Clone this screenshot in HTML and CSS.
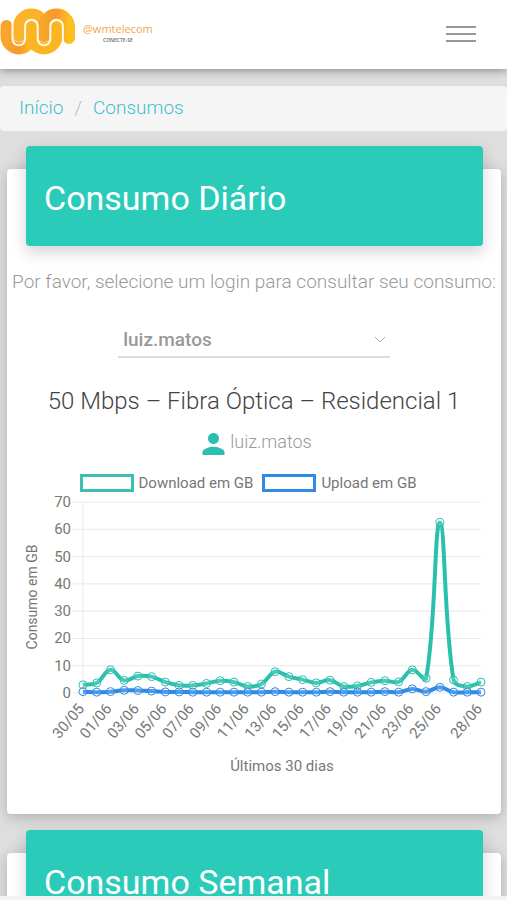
FILE: index.html
```html
<!DOCTYPE html>
<html lang="pt-BR">
<head>
    <meta charset="UTF-8">
    <meta name="viewport" content="width=device-width, initial-scale=1.0">
    <title>Consumos</title>
    <link rel="stylesheet" href="styles.css">
</head>
<body>
    <div class="page">
        <header class="navbar">
            <a href="#" class="brand">
                <svg class="brand-mark" viewBox="0 0 76 48" aria-hidden="true">
                    <defs>
                        <linearGradient id="gold" x1="0" y1="0" x2="1" y2="0">
                            <stop offset="0" stop-color="#f7a62b"/>
                            <stop offset="0.5" stop-color="#f8972c"/>
                            <stop offset="1" stop-color="#fdc020"/>
                        </linearGradient>
                    </defs>
                    <g fill="none" stroke-width="12" stroke-linecap="round">
                        <path stroke="url(#gold)" d="M6.500 18V28a12.500 12.500 0 0 0 25 0V19"/>
                        <path stroke="#fbb521" d="M31.500 19V28a12.500 12.500 0 0 0 25 0V19"/>
                        <path stroke="#fab32a" d="M19 28V19a12.500 12.500 0 0 1 25 0V28"/>
                        <path stroke="url(#gold)" d="M44 28V19a12.500 12.500 0 0 1 25 0V30"/>
                    </g>
                    <path fill="none" stroke="#fffbea" stroke-width="2" stroke-linecap="round" d="M12.500 12V31a6.300 6.300 0 0 0 12.600 0V18a6.300 6.300 0 0 1 12.600 0V31a6.300 6.300 0 0 0 12.600 0V18a6.300 6.300 0 0 1 12.600 0V37"/>
                </svg>
                <span class="brand-text">
                    <span class="brand-name">@wmtelecom</span>
                    <span class="brand-slogan">CONECTE-SE</span>
                </span>
            </a>
            <button type="button" class="menu-btn" aria-label="Menu">
                <span></span>
                <span></span>
                <span></span>
            </button>
        </header>

        <nav class="breadcrumb">
            <a href="#">Início</a>
            <span class="separator">/</span>
            <a href="#">Consumos</a>
        </nav>

        <main>
            <section class="card">
                <h2 class="card-title">Consumo Diário</h2>
                <form class="login-form">
                    <label for="login">Por favor, selecione um login para consultar seu consumo:</label>
                    <div class="select-box">
                        <select id="login" name="login">
                            <option>luiz.matos</option>
                        </select>
                        <svg class="arrow" viewBox="0 0 12 8" aria-hidden="true"><path d="M1 1l5 5 5-5"/></svg>
                    </div>
                </form>
                <h3 class="plan">50 Mbps – Fibra Óptica – Residencial 1</h3>
                <p class="user">
                    <svg viewBox="4 4 16 16" aria-hidden="true"><path d="M12 12c2.210 0 4-1.790 4-4s-1.790-4-4-4-4 1.790-4 4 1.790 4 4 4zm0 2c-2.670 0-8 1.340-8 4v2h16v-2c0-2.660-5.330-4-8-4z"/></svg>
                    luiz.matos
                </p>
                <div class="legend">
                    <span class="key download"></span>Download em GB
                    <span class="key upload"></span>Upload em GB
                </div>
                <svg class="chart" id="daily" viewBox="0 0 494 285" role="img" aria-label="Consumo em GB, últimos 30 dias"></svg>
            </section>

            <section class="card">
                <h2 class="card-title">Consumo Semanal</h2>
            </section>
        </main>
    </div>
    <script src="script.js"></script>
</body>
</html>
```
FILE: styles.css
```css
* {
  box-sizing: border-box;
}

body {
  margin: 0;
  background: #f3f3f3;
  color: #999;
  font-family: Roboto, "Liberation Sans", sans-serif;
  font-weight: 300;
}

.page {
  height: calc(100vh - 4px);
  overflow: hidden auto;
  scrollbar-width: none;
  background: #dedede;
}

.navbar {
  position: relative;
  display: flex;
  justify-content: space-between;
  align-items: center;
  height: 69px;
  padding: 0 31px 2px 0;
  background: #fff;
  box-shadow: 0 2px 8px rgba(0, 0, 0, 0.35);
}

.brand {
  display: flex;
  align-items: center;
  gap: 7px;
  padding-bottom: 3px;
  text-decoration: none;
}

.brand-mark {
  width: 76px;
  height: 48px;
}

.brand-text {
  display: flex;
  flex-direction: column;
  align-items: center;
  font-family: "Open Sans", sans-serif;
}

.brand-name {
  color: #f3a64d;
  font-size: 11px;
  line-height: 15px;
  font-weight: 400;
}

.brand-slogan {
  color: #666;
  font-size: 5px;
  line-height: 8px;
  font-weight: 600;
}

.menu-btn {
  display: flex;
  flex-direction: column;
  gap: 5px;
  padding: 0;
  border: none;
  background: none;
  cursor: pointer;
}

.menu-btn span {
  width: 30px;
  height: 2px;
  background: #999;
}

.breadcrumb {
  display: flex;
  gap: 11px;
  margin-top: 17px;
  padding: 10px 19px 12px;
  border-radius: 4px;
  background: #f5f5f5;
  font-size: 19px;
  line-height: 23px;
}

.breadcrumb a {
  color: #3fbfcb;
  text-decoration: none;
}

.separator {
  color: #bbb;
}

main {
  padding: 38px 6px 0 7px;
}

.card {
  margin-bottom: 39px;
  padding-bottom: 37px;
  border-radius: 4px;
  background: #fff;
  box-shadow: 0 3px 14px rgba(0, 0, 0, 0.22);
  text-align: center;
}

.card-title {
  position: relative;
  top: -23px;
  margin: 0 18px 0 19px;
  padding: 32px 18px 28px;
  border-radius: 4px;
  background: #2bcbba;
  box-shadow: 0 6px 16px rgba(0, 0, 0, 0.18);
  color: #fff;
  font-size: 34px;
  line-height: 40px;
  font-weight: 400;
  text-align: left;
}

.login-form label {
  display: block;
  padding-top: 1px;
  font-size: 19px;
  line-height: 24px;
  white-space: nowrap;
}

.select-box {
  position: relative;
  width: 55%;
  margin: 28px auto 0;
}

.select-box select {
  width: 100%;
  height: 36px;
  padding: 0 5px;
  border: none;
  border-bottom: 2px solid #ddd;
  background: none;
  color: #999;
  font: 500 19px Roboto, sans-serif;
  appearance: none;
}

.arrow {
  position: absolute;
  top: 14px;
  right: 4px;
  width: 12px;
  height: 8px;
  fill: none;
  stroke: #aaa;
  pointer-events: none;
}

.plan {
  margin: 28px 0 13px;
  color: #444;
  font-size: 24px;
  line-height: 30px;
  font-weight: 300;
}

.user {
  display: flex;
  justify-content: center;
  align-items: center;
  gap: 5px;
  margin: 0 0 19px;
  padding-left: 6px;
  font-size: 18px;
  line-height: 24px;
}

.user svg {
  width: 23px;
  height: 22px;
  margin-top: 4px;
  fill: #2bbfb0;
}

.legend {
  display: flex;
  justify-content: center;
  align-items: center;
  gap: 5px;
  height: 18px;
  padding-right: 12px;
  color: #777;
  font-size: 15px;
  font-weight: 400;
  white-space: nowrap;
}

.key {
  width: 54px;
  height: 18px;
  border: 3px solid #3cbfae;
}

.upload {
  margin-left: 4px;
  border-color: #2f8ae5;
}

.chart {
  display: block;
  width: 100%;
}

.chart text {
  fill: #777;
  font-size: 15px;
  font-weight: 400;
}

.chart .y-title {
  font-size: 14px;
}

.grid {
  stroke: #e8e8e8;
}

.line {
  fill: none;
  stroke-width: 4;
}

.point {
  fill: rgba(255, 255, 255, 0.15);
}
```
FILE: script.js
```js
const chart = document.querySelector('#daily');
const left = 76;
const right = 474;
const top0 = 10;
const bottom = 201;
const max = 70;

const download = [3, 3.7, 8.5, 4.6, 6.2, 6, 4, 2.8, 2.8, 3.5, 4.5, 4, 2.4, 3.3, 7.8, 6, 4.9, 3.7, 4.7, 2.4, 2.6, 3.9, 4.5, 4.1, 8.5, 5.4, 62.5, 4.8, 2.4, 4];
const upload = [0.5, 0.3, 0.5, 1, 0.9, 0.7, 0.4, 0.4, 0.3, 0.3, 0.3, 0.3, 0.3, 0.3, 0.5, 0.3, 0.3, 0.3, 0.5, 0.3, 0.3, 0.3, 0.5, 0.3, 1.5, 0.5, 2.1, 0.3, 0.3, 0.3];
const labels = ['30/05', '01/06', '03/06', '05/06', '07/06', '09/06', '11/06', '13/06', '15/06', '17/06', '19/06', '21/06', '23/06', '25/06', '28/06'];

function add(name, attrs, text) {
  const el = document.createElementNS('http://www.w3.org/2000/svg', name);
  for (const key in attrs) {
    el.setAttribute(key, attrs[key]);
  }
  if (text) el.textContent = text;
  chart.appendChild(el);
}

const x = i => left + (right - left) * i / 29;
const y = v => bottom - (bottom - top0) * v / max;
const clamp = v => Math.min(bottom, Math.max(top0, v));

// axes
for (let v = 0; v <= max; v += 10) {
  add('line', { class: 'grid', x1: left - 10, x2: right, y1: y(v), y2: y(v) });
  add('text', { x: left - 12, y: y(v) + 5, 'text-anchor': 'end' }, String(v));
}
add('line', { class: 'grid', x1: left, x2: left, y1: top0, y2: bottom + 8 });

labels.forEach((label, n) => {
  const px = x(n === 14 ? 29 : n * 2) + 2;
  add('text', { 'text-anchor': 'end', transform: `translate(${px} ${bottom + 16}) rotate(-50)` }, label);
});

add('text', { class: 'y-title', 'text-anchor': 'middle', transform: 'translate(30 105) rotate(-90)' }, 'Consumo em GB');
add('text', { x: (left + right) / 2, y: 279, 'text-anchor': 'middle' }, 'Últimos 30 dias');

// smoothed line with a ring on every day
function drawSeries(values, color) {
  const pts = values.map((v, i) => [x(i), y(v)]);
  const controls = pts.map((p, i) => {
    const prev = pts[i - 1] || p;
    const next = pts[i + 1] || p;
    const a = Math.hypot(p[0] - prev[0], p[1] - prev[1]);
    const b = Math.hypot(next[0] - p[0], next[1] - p[1]);
    const fa = 0.4 * a / (a + b);
    const fb = 0.4 * b / (a + b);
    const dx = next[0] - prev[0];
    const dy = next[1] - prev[1];
    return {
      before: [p[0] - fa * dx, clamp(p[1] - fa * dy)],
      after: [p[0] + fb * dx, clamp(p[1] + fb * dy)]
    };
  });

  let d = `M${pts[0]}`;
  for (let i = 1; i < pts.length; i++) {
    d += `C${controls[i - 1].after} ${controls[i].before} ${pts[i]}`;
  }
  add('path', { class: 'line', d: d, stroke: color });
  pts.forEach(p => add('circle', { class: 'point', cx: p[0], cy: p[1], r: 4, stroke: color }));
}

drawSeries(download, '#2bc0ae');
drawSeries(upload, '#2f8ae5');
```
